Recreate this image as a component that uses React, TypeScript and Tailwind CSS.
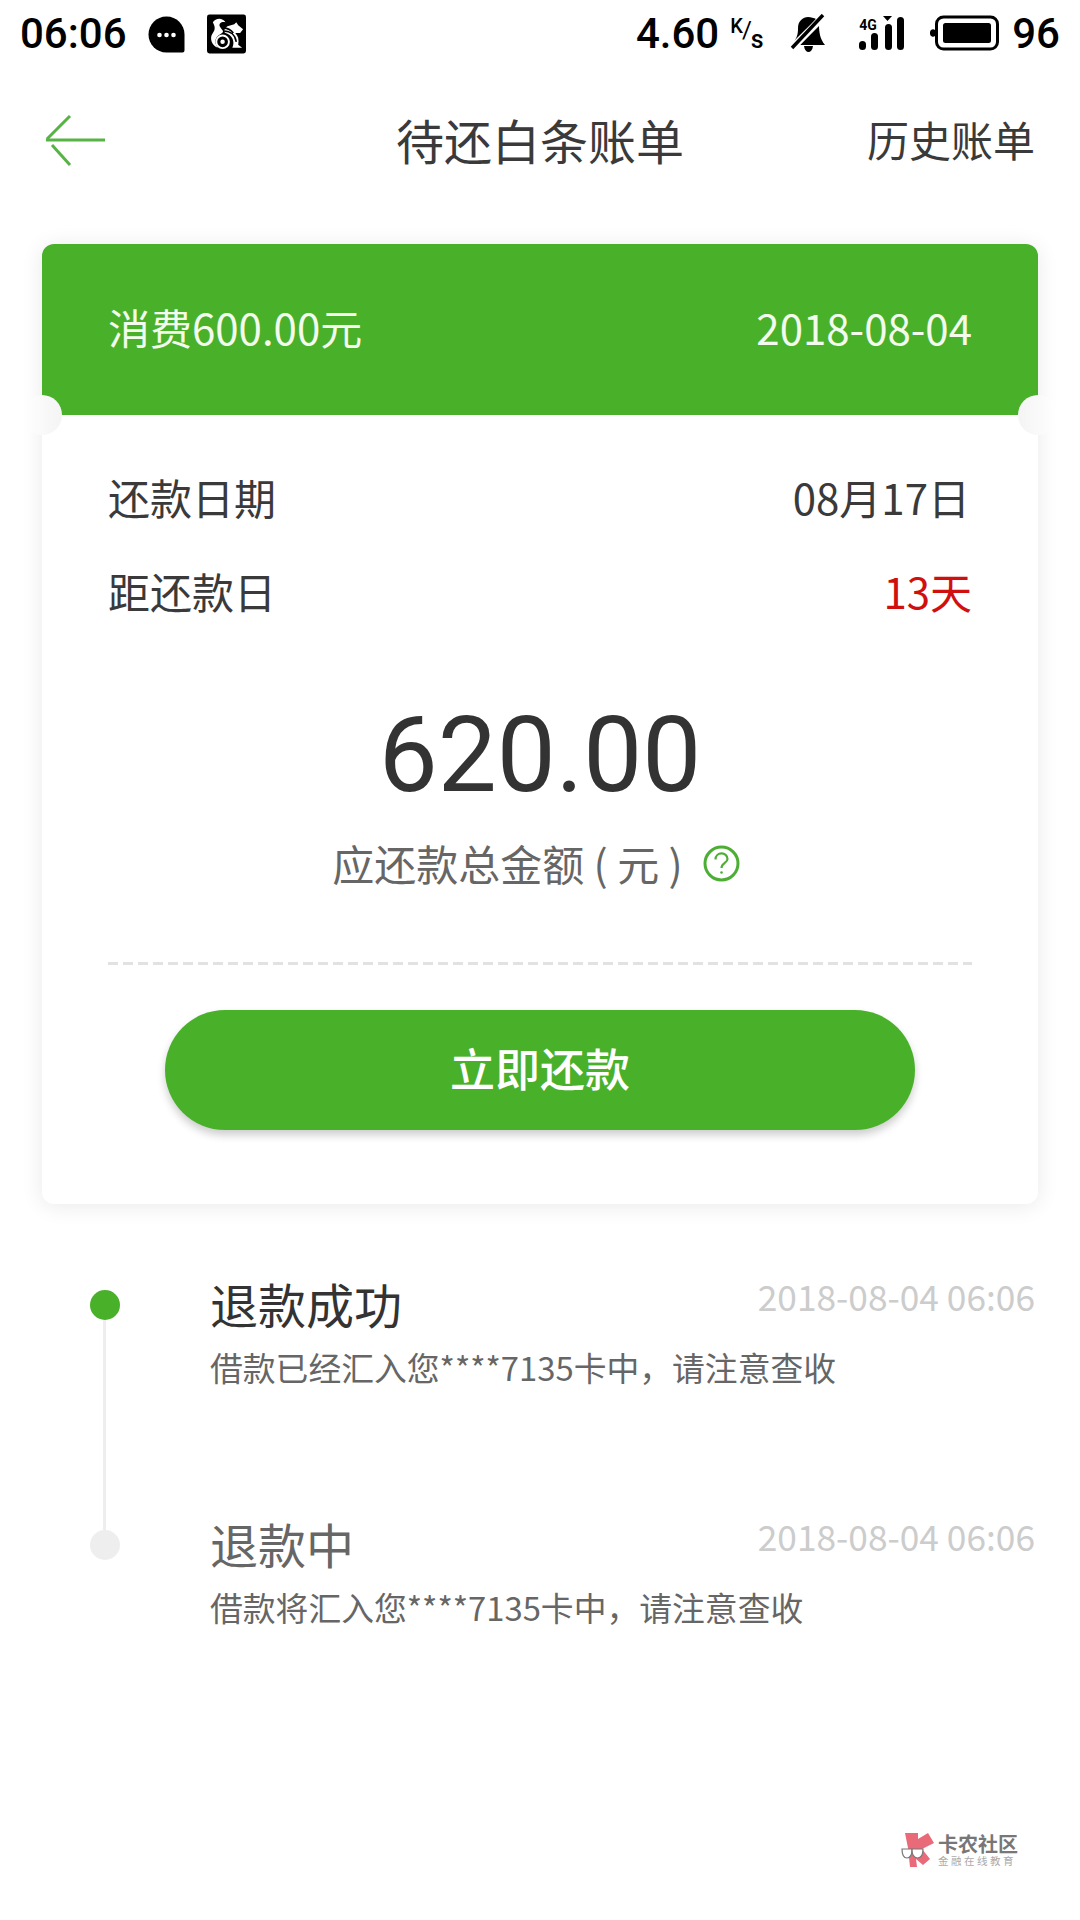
const steps = [
  { title: '退款成功', desc: '借款已经汇入您****7135卡中，请注意查收', time: '2018-08-04 06:06', titleClass: 'text-[#333]' },
  { title: '退款中', desc: '借款将汇入您****7135卡中，请注意查收', time: '2018-08-04 06:06', titleClass: 'text-[#666]' },
]

function StatusBar() {
  return (
    <div className="h-[68px] flex items-center justify-between pl-[20px] pr-[20px] font-['Roboto',sans-serif] font-medium text-black">
      <div className="flex items-center">
        <span className="text-[42px] leading-none">06:06</span>
        {/* message bubble */}
        <svg className="ml-[21px]" width="37" height="37" viewBox="0 0 37 37">
          <path d="M18.500 0.500C28.500 0.500 36.500 8.500 36.500 18.500V34.500a2 2 0 0 1-2 2H18.500C8.500 36.500 0.500 28.500 0.500 18.500S8.500 0.500 18.500 0.500Z" fill="#000" />
          <circle cx="11.500" cy="19" r="2.300" fill="#fff" />
          <circle cx="18.500" cy="19" r="2.300" fill="#fff" />
          <circle cx="25.500" cy="19" r="2.300" fill="#fff" />
        </svg>
        {/* uc browser */}
        <svg className="ml-[22px]" width="39" height="40" viewBox="0 0 40 40">
          <rect width="40" height="40" rx="2.500" fill="#000" />
          <path d="M6 8C9 3 16 3 19 8C15 7 12 9 13 12C15 16 19 17 14 20C8 23 7 29 11 34C5 32 2 24 6 19C9 15 8 12 6 8Z" fill="#fff" />
          <circle cx="16" cy="28" r="6.500" fill="none" stroke="#fff" strokeWidth="2" />
          <circle cx="16" cy="28" r="2.300" fill="#fff" />
          <path d="M21 12L28 10L30 8L32 11L37 15L34 19L29 19C32 22 33 26 32 31L36 34H26C29 28 26 21 19 19C17 18 17 15 21 12Z" fill="#fff" />
          <path d="M17 17C24 17 29 21 30 28M17 14C19 14 24 15 27 19" fill="none" stroke="#000" strokeWidth="1.600" />
        </svg>
      </div>
      <div className="flex items-center">
        <span className="text-[42px] leading-none">4.60</span>
        <span className="ml-[11px] w-[34px] h-[36px] flex items-start leading-none">
          <span className="text-[20px]">K</span>
          <span className="text-[24px] font-normal mt-[2px] ml-[-1px]">/</span>
          <span className="text-[25px] mt-[11px] ml-[-1px]">s</span>
        </span>
        {/* muted bell */}
        <svg className="ml-[25px] mb-[2px]" width="38" height="38" viewBox="0 0 36 38">
          <path d="M4 28C8 22 8 18 8 14C8 7 13 3 18 3C21 3 24 4 26 5L6 28Z" fill="#000" />
          <path d="M29 11C29 18 30 25 35 31H10Z" fill="#000" />
          <path d="M14 32H23C22.500 36 20.500 38 18.500 38S14.500 36 14 32Z" fill="#000" />
          <path d="M3 33 34 2" stroke="#fff" strokeWidth="7" />
          <path d="M2 34 33 1" stroke="#000" strokeWidth="3.500" />
        </svg>
        {/* 4G signal */}
        <div className="relative ml-[31px] mb-[2px] w-[47px] h-[36px]">
          <span className="absolute left-[1px] top-[3px] text-[14px] leading-none font-bold">4G</span>
          <svg className="absolute inset-0" width="47" height="36" viewBox="0 0 47 36">
            <path d="M25 1h9l-4.500 5Z" fill="#000" />
            <rect x="1" y="26" width="7" height="9" rx="3.500" fill="#000" />
            <rect x="13" y="18" width="7" height="17" rx="3.500" fill="#000" />
            <rect x="27" y="9" width="7" height="26" rx="3.500" fill="#000" />
            <rect x="39" y="2" width="7" height="33" rx="3.500" fill="#000" />
          </svg>
        </div>
        {/* battery */}
        <svg className="ml-[25px] mb-[2px]" width="69" height="36" viewBox="0 0 69 36">
          <path d="M0 17a3 3 0 0 1 5-2v6a3 3 0 0 1-5-2Z" fill="#000" />
          <rect x="6.500" y="2" width="61" height="32" rx="7" fill="none" stroke="#000" strokeWidth="3" />
          <rect x="13" y="8" width="48" height="20" rx="2.500" fill="#000" />
        </svg>
        <span className="ml-[13px] text-[42px] leading-none">96</span>
      </div>
    </div>
  )
}

function Watermark() {
  return (
    <div className="flex items-center gap-[3px]">
      <svg width="34" height="36" viewBox="0 0 34 36">
        <path d="M4 1H17V7L27 1L33 11L21 17L29 27L22 33L15 27L16 35H9L7 16Z" fill="#e96a78" />
        <path d="M1 17H11C11 23 9 26 6 26C3 26 1 23 1 17Z" fill="#fff" stroke="#777" strokeWidth="1.200" />
        <path d="M11 17H22C22 23 20 26 16.500 26C13 26 11 23 11 17Z" fill="#fff" stroke="#777" strokeWidth="1.200" />
      </svg>
      <div className="flex flex-col">
        <span className="text-[20px] leading-[22px] font-bold text-[#777]">卡农社区</span>
        <span className="text-[10.500px] leading-[12px] tracking-[2.500px] text-[#aaa]">金融在线教育</span>
      </div>
    </div>
  )
}

export default function App() {
  return (
    <div className="relative w-[1080px] h-[1920px] bg-white overflow-hidden font-['Noto_Sans_CJK_SC',sans-serif]">
      <StatusBar />

      {/* Nav */}
      <div className="h-[146px] grid grid-cols-[1fr_auto_1fr] items-center">
        <div className="pl-[45px]">
          <svg width="60" height="52" viewBox="0 0 60 52" fill="none" stroke="#58b347" strokeWidth="3">
            <path d="M1 25H60" />
            <path d="M25 1 2 24" />
            <path d="M7 30 25 50" />
          </svg>
        </div>
        <div className="pb-[5px] text-[48px] leading-none text-[#3a3a3a]">待还白条账单</div>
        <div className="pb-[5px] text-right pr-[45px] text-[42px] leading-none text-[#3a3a3a]">历史账单</div>
      </div>

      {/* Bill card */}
      <div className="relative mt-[30px] mx-[42px] rounded-[12px] bg-white shadow-[0_2px_22px_rgba(0,0,0,0.09)]">
        <div className="h-[171px] pb-[5px] rounded-t-[12px] bg-[#49b02a] flex items-center justify-between pl-[66px] pr-[66px] text-[42px] leading-none text-[#f2fbec]">
          <span>消费600.00元</span>
          <span>2018-08-04</span>
        </div>
        <div className="absolute left-[-20px] top-[151px] w-[40px] h-[40px] rounded-full bg-[linear-gradient(to_right,#ffffff,#f4f4f4)]" />
        <div className="absolute right-[-20px] top-[151px] w-[40px] h-[40px] rounded-full bg-[linear-gradient(to_left,#ffffff,#f4f4f4)]" />

        <div className="pt-[38px] px-[66px] text-[42px] leading-none text-[#3a3a3a]">
          <div className="h-[94px] pb-[6px] flex items-center justify-between">
            <span>还款日期</span>
            <span className="pr-[2px]">08月17日</span>
          </div>
          <div className="h-[94px] pb-[6px] flex items-center justify-between">
            <span>距还款日</span>
            <span className="text-[#d0100f]">13天</span>
          </div>
        </div>

        <div className="mt-[54px] h-[120px] flex items-center justify-center font-['Roboto',sans-serif] text-[105px] leading-none text-[#333]">
          620.00
        </div>
        <div className="mt-[21px] h-[60px] pb-[6px] pr-[8px] flex items-center justify-center text-[42px] leading-none text-[#666]">
          <span>应还款总金额 ( 元 )</span>
          <svg className="ml-[20px]" width="37" height="37" viewBox="0 0 37 37" fill="none" stroke="#4cae34" strokeWidth="3">
            <circle cx="18.500" cy="18.500" r="16.500" />
            <path d="M12.500 14.500c0-8 12-8 12-.5 0 4-6 4-6 9" strokeWidth="2.200" />
            <circle cx="18.500" cy="27.500" r="1.300" fill="#4cae34" stroke="none" />
          </svg>
        </div>

        <div className="mt-[66px] mx-[66px] h-[3px] bg-[repeating-linear-gradient(90deg,#e2e2e2_0,#e2e2e2_10px,transparent_10px,transparent_15px)]" />

        <div className="mt-[45px] mx-[123px] h-[120px] pb-[6px] rounded-full bg-[#49b02a] flex items-center justify-center text-[45px] leading-none font-medium text-white shadow-[0_5px_9px_rgba(0,0,0,0.2)]">
          立即还款
        </div>
        <div className="h-[74px]" />
      </div>

      {/* Timeline */}
      <div className="mt-[71px] flex">
        <div className="w-[210px] pl-[90px] pt-[15px] flex flex-col">
          <div className="w-[30px] h-[30px] rounded-full bg-[#49b02a]" />
          <div className="ml-[13px] w-[3px] h-[210px] bg-[#eeeeee]" />
          <div className="w-[30px] h-[30px] rounded-full bg-[#eeeeee]" />
        </div>
        <div className="flex-1 pr-[45px]">
          {steps.map((s) => (
            <div key={s.title} className="h-[240px]">
              <div className="h-[60px] pb-[5px] flex items-center justify-between">
                <span className={`text-[48px] leading-none ${s.titleClass}`}>{s.title}</span>
                <span className="self-start mt-[3px] text-[35.300px] leading-none text-[#cccccc]">{s.time}</span>
              </div>
              <div className="mt-[16px] text-[32.800px] leading-none text-[#666]">{s.desc}</div>
            </div>
          ))}
        </div>
      </div>

      <div className="absolute left-[901px] top-[1832px]">
        <Watermark />
      </div>
    </div>
  )
}
